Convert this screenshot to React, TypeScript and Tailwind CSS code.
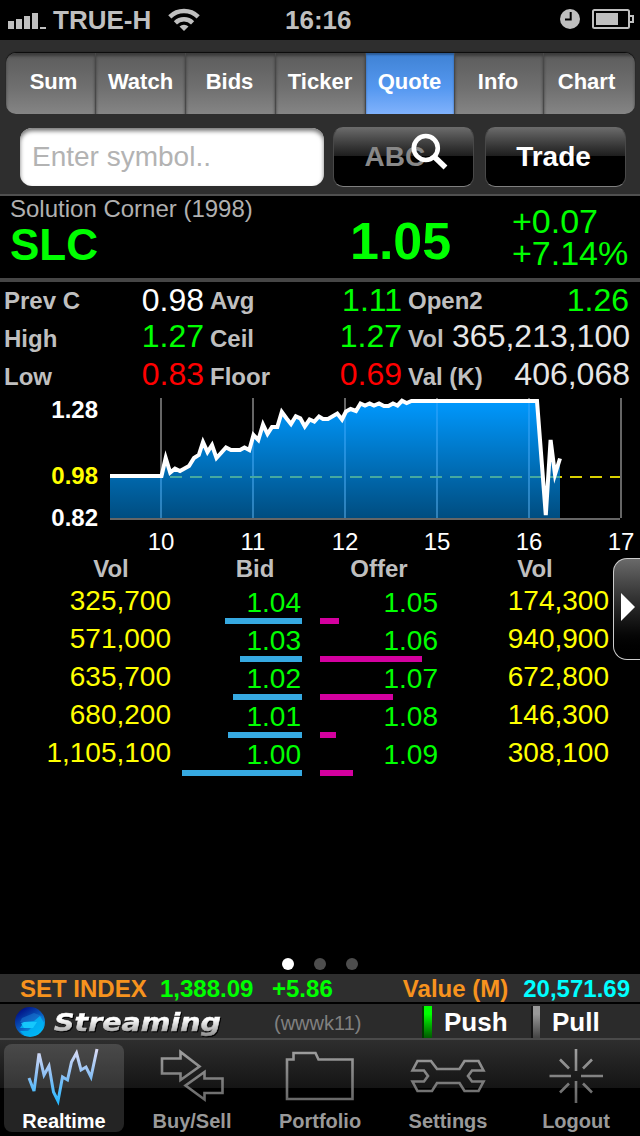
import type { ReactNode } from "react";
import clsx from "clsx";

interface Stat {
  label: string;
  value: string;
  color: string;
}

interface BookRow {
  bidVol: string;
  bid: string;
  bidBar: number;
  offer: string;
  offerBar: number;
  offerVol: string;
}

const tabs = [
  { label: "Sum", width: "w-[90px] pl-[6px]" },
  { label: "Watch", width: "w-[90px]" },
  { label: "Bids", width: "w-[90px] pr-0.5" },
  { label: "Ticker", width: "w-[90px] pr-px" },
  { label: "Quote", width: "w-[89px] pr-px" },
  { label: "Info", width: "w-[89px] pr-0.5" },
  { label: "Chart", width: "w-[91px] pr-[6px]" },
];

const stats: Stat[][] = [
  [
    { label: "Prev C", value: "0.98", color: "text-white" },
    { label: "Avg", value: "1.11", color: "text-[#00ff00]" },
    { label: "Open2", value: "1.26", color: "text-[#00ff00]" },
  ],
  [
    { label: "High", value: "1.27", color: "text-[#00ff00]" },
    { label: "Ceil", value: "1.27", color: "text-[#00ff00]" },
    { label: "Vol", value: "365,213,100", color: "text-[#e6e6e6]" },
  ],
  [
    { label: "Low", value: "0.83", color: "text-[#ff0000]" },
    { label: "Floor", value: "0.69", color: "text-[#ff0000]" },
    { label: "Val (K)", value: "406,068", color: "text-[#e6e6e6]" },
  ],
];

const book: BookRow[] = [
  { bidVol: "325,700", bid: "1.04", bidBar: 77, offer: "1.05", offerBar: 19, offerVol: "174,300" },
  { bidVol: "571,000", bid: "1.03", bidBar: 62, offer: "1.06", offerBar: 102, offerVol: "940,900" },
  { bidVol: "635,700", bid: "1.02", bidBar: 69, offer: "1.07", offerBar: 73, offerVol: "672,800" },
  { bidVol: "680,200", bid: "1.01", bidBar: 74, offer: "1.08", offerBar: 16, offerVol: "146,300" },
  { bidVol: "1,105,100", bid: "1.00", bidBar: 120, offer: "1.09", offerBar: 33, offerVol: "308,100" },
];

const hours = ["10", "11", "12", "15", "16", "17"];
const gridX = [161, 253, 345, 437, 529, 621];

const pricePoints =
  "110,476 161.5,476 165.7,458 170.2,472.5 175,468.7 180,471 189,466 194,458 198.8,455 203,442 207.5,452 212,445 216.5,458 226,447.5 231,450 240,450 244.5,447.5 249.3,450 253.5,435 258.3,440 263,424.5 267.5,434 272,427 277.3,427 281.8,412 286.6,418.5 291,424 295.8,416.3 300.3,418.3 304.8,426.5 309.6,419.5 314.3,421.5 319,416.5 323,419 328,419 337.3,413.5 342,419.5 346,411.5 350.6,409 356,411 360.5,403.5 365,405.5 369.6,403.5 374,405.5 379,403.5 384,406 388.5,406 393,403.5 397.5,405.5 402,400.8 406.6,403 411.5,401 537,401 545.8,515 550.6,440 555,474.5 560,458.5";

function StatusBar() {
  return (
    <div className="flex h-10 items-center bg-black text-[26px] leading-10 font-bold text-[#bfbfbf]">
      <svg className="ml-2 h-10 w-[38px]" viewBox="8 0 38 40" fill="#bfbfbf">
        <path d="M8 21h6v8H8zM16 19h6v10h-6zM24 16h6v13h-6zM32 13h6v16h-6zM40 27h6v2h-6z" />
      </svg>
      <span className="ml-[7px] w-[107px]">TRUE-H</span>
      <svg className="ml-[7px] h-10 w-[34px]" viewBox="167 0 34 40" fill="none" stroke="#bfbfbf" strokeWidth="4.5">
        <path d="M169.8 16.8a20.3 20.3 0 0 1 28.4 0" />
        <path d="M175.4 22.8a12.3 12.3 0 0 1 17.2 0" />
        <path d="M179.5 26.4a6.6 6.6 0 0 1 9 0L184 31z" fill="#bfbfbf" stroke="none" />
      </svg>
      <span className="ml-[84px] w-[80px]">16:16</span>
      <svg className="ml-auto h-10 w-[76px]" viewBox="558 0 76 40">
        <circle cx="570" cy="19" r="10" fill="#bfbfbf" />
        <path d="M570.7 12v7.5H565" fill="none" stroke="#000" strokeWidth="2" />
        <rect x="593" y="10" width="36" height="18" rx="1.5" fill="none" stroke="#bfbfbf" strokeWidth="2" />
        <path d="M596 13h22v12h-22z" fill="#bfbfbf" />
        <path d="M630 16h3v6h-3" fill="none" stroke="#bfbfbf" strokeWidth="2" />
      </svg>
      <div className="w-1.5" />
    </div>
  );
}

function GlossButton({ children }: { children: ReactNode }) {
  return (
    <button
      type="button"
      className="flex h-[60px] w-[141px] items-center justify-center rounded-[10px] border border-t-[#6a6a6a] border-x-[#484848] border-b-[#808080] bg-linear-to-b from-[#6a6a6a] from-0% via-[#1e1e1e] via-48% to-black to-49% text-[28px] font-bold text-white"
    >
      {children}
    </button>
  );
}

function Header() {
  return (
    <header className="h-[154px] bg-[#2e2e2e] pt-[13px]">
      <nav className="ml-[6px] flex h-[61px] w-[629px] overflow-hidden rounded-[10px] bg-linear-to-b from-[#5c5c5c] from-0% via-[#707070] via-58% to-[#858585] to-100% text-[22px] font-bold text-white shadow-[0_-1px_1px_#0a0a0a]">
        {tabs.map((tab, i) => (
          <a
            key={tab.label}
            className={clsx(
              "flex h-full items-center justify-center pb-[5px]",
              tab.width,
              i < tabs.length - 1 && "border-r border-[#484848]",
              tab.label === "Quote"
                ? "bg-linear-to-b from-[#3f82d4] from-0% via-[#5598f0] via-58% to-[#80b2fc] to-100% shadow-[inset_0_2px_2px_#2b5a94]"
                : "shadow-[inset_0_3px_3px_#3c3c3c]"
            )}
          >
            {tab.label}
          </a>
        ))}
      </nav>
      <div className="mt-[13px] flex">
        <div className="mt-px ml-5 flex h-[58px] w-[304px] items-center rounded-[12px] bg-white pl-3 text-[28px] text-[#b3b3b3] shadow-[inset_0_3px_4px_#777]">
          Enter symbol..
        </div>
        <div className="ml-[9px]">
          <GlossButton>
            <span className="relative h-8 w-[78px] text-left leading-8 font-black text-[#888]">
              ABC
              <svg
                className="absolute -top-[10px] left-[44px]"
                width="40"
                height="40"
                viewBox="408 132 40 40"
                fill="none"
                stroke="#fff"
              >
                <circle cx="424.8" cy="149" r="12" strokeWidth="4.6" />
                <path d="m433 157.5 11.5 11" strokeWidth="5.5" />
              </svg>
            </span>
          </GlossButton>
        </div>
        <div className="ml-[11px]">
          <GlossButton>
            <span className="pr-1">Trade</span>
          </GlossButton>
        </div>
      </div>
    </header>
  );
}

function Summary() {
  return (
    <section className="flex h-[88px] border-t-2 border-b-4 border-t-[#505050] border-b-[#464646] text-[#00ff00]">
      <div className="ml-[10px] w-[340px]">
        <div className="h-[26px] text-2xl leading-[26px] text-[#b0b0b0]">Solution Corner (1998)</div>
        <div className="text-[44px] leading-[46px] font-bold">SLC</div>
      </div>
      <div className="w-[162px] pt-[15px] text-[52px] leading-[60px] font-bold">1.05</div>
      <div className="pt-[9px] text-[34px] leading-8">
        <div>+0.07</div>
        <div>+7.14%</div>
      </div>
    </section>
  );
}

function Stats() {
  return (
    <section>
      {stats.map((row, r) => (
        <div key={r} className="flex h-[38px] pl-1">
          {row.map((stat, c) => (
            <div
              key={stat.label}
              className={clsx(
                "flex items-center justify-between",
                c === 0 && "w-[200px]",
                c === 1 && "ml-[6px] w-[192px]",
                c === 2 && "ml-[6px] w-[222px]",
                c === 2 && r === 0 && "pr-px"
              )}
            >
              <span className="text-2xl font-bold text-[#bfbfbf]">{stat.label}</span>
              <span className={clsx("text-[32px] leading-8", stat.color, r === 0 ? "pb-[2px]" : "pb-[6px]")}>
                {stat.value}
              </span>
            </div>
          ))}
        </div>
      ))}
    </section>
  );
}

function PriceChart() {
  const area = `110,518 ${pricePoints} 560,518`;

  return (
    <section className="h-[160px] overflow-hidden">
      <div className="flex h-[130px]">
        <div className="w-[98px] text-right text-2xl leading-6 font-bold text-white">
          <div className="mt-0.5">1.28</div>
          <div className="mt-[42px] text-[#ffff00]">0.98</div>
          <div className="mt-[18px]">0.82</div>
        </div>
        <svg className="ml-3" width="514" height="126" viewBox="110 396 514 126">
          <defs>
            <linearGradient id="area" x1="0" y1="400" x2="0" y2="518" gradientUnits="userSpaceOnUse">
              <stop offset="0" stopColor="#0099ff" />
              <stop offset="1" stopColor="#004d80" />
            </linearGradient>
            <linearGradient id="gridInside" x1="0" y1="400" x2="0" y2="518" gradientUnits="userSpaceOnUse">
              <stop offset="0" stopColor="#1a9fff" />
              <stop offset="1" stopColor="#2f80b8" />
            </linearGradient>
            <clipPath id="areaClip">
              <polygon points={area} />
            </clipPath>
          </defs>
          {gridX.map((x) => (
            <path key={x} d={`M${x} 398V518`} stroke="#666" strokeWidth="2" />
          ))}
          <path d="M110 477H620" stroke="#d9d000" strokeWidth="2" strokeDasharray="12 8" />
          <polygon points={area} fill="url(#area)" />
          <g clipPath="url(#areaClip)">
            {gridX.map((x) => (
              <rect key={x} x={x - 1} y="398" width="2" height="120" fill="url(#gridInside)" />
            ))}
            <path d="M110 477H620" stroke="#45a9a0" strokeWidth="2" strokeDasharray="12 8" />
          </g>
          <path d="M110 519H620" stroke="#666" strokeWidth="2" />
          <polyline points={pricePoints} fill="none" stroke="#fff" strokeWidth="4" strokeMiterlimit="6" />
        </svg>
      </div>
      <div className="flex pl-[115px] text-2xl leading-8 text-white">
        {hours.map((hour) => (
          <div key={hour} className="w-[92px] shrink-0 text-center">
            {hour}
          </div>
        ))}
      </div>
    </section>
  );
}

function OrderBook() {
  return (
    <section className="h-[230px]">
      <div className="mb-[5px] flex h-[25px] text-center text-2xl leading-[26px] font-bold text-[#bfbfbf]">
        <div className="ml-[40px] w-[142px]">Vol</div>
        <div className="ml-[13px] w-[120px]">Bid</div>
        <div className="ml-[5px] w-[118px]">Offer</div>
        <div className="ml-[37px] w-[120px]">Vol</div>
      </div>
      {book.map((row) => (
        <div key={row.bid} className="flex h-[38px] text-[28px] text-[#ffff00]">
          <div className="w-[171px] text-right leading-[30px]">{row.bidVol}</div>
          <div className="flex w-[131px] flex-col items-end text-[#00ff00]">
            <div className="h-8 pr-px leading-[33px]">{row.bid}</div>
            <div className="h-1.5 bg-[#36a9e1]" style={{ width: row.bidBar }} />
          </div>
          <div className="ml-[18px] w-[118px] text-right text-[#00ff00]">
            <div className="h-8 leading-[33px]">{row.offer}</div>
            <div className="h-1.5 bg-[#d4009f]" style={{ width: row.offerBar }} />
          </div>
          <div className="w-[171px] text-right leading-[30px]">{row.offerVol}</div>
        </div>
      ))}
    </section>
  );
}

function DrawerHandle() {
  return (
    <button
      type="button"
      className="absolute top-[558px] right-0 flex h-[102px] w-[27px] items-center rounded-l-[14px] border border-r-0 border-[#ccc] bg-linear-to-b from-[#6a6a6a] to-black pb-1 pl-[7px]"
    >
      <svg width="14" height="28" viewBox="0 0 14 28" fill="#fff">
        <path d="M0 0 14 14 0 28z" />
      </svg>
    </button>
  );
}

function Brand() {
  return (
    <svg width="228" height="34" viewBox="0 1004 228 34">
      <defs>
        <linearGradient id="orb" x1="0.1" y1="0.1" x2="0.7" y2="1">
          <stop offset="0" stopColor="#000a80" />
          <stop offset="0.55" stopColor="#0a62c4" />
          <stop offset="1" stopColor="#00c8ff" />
        </linearGradient>
        <linearGradient id="brandText" x1="0" y1="1012" x2="0" y2="1036" gradientUnits="userSpaceOnUse">
          <stop offset="0.3" stopColor="#fff" />
          <stop offset="1" stopColor="#8c8c8c" />
        </linearGradient>
      </defs>
      <circle cx="30" cy="1022" r="15" fill="url(#orb)" />
      <path d="m22 1018 12-5 8 3 2 6H20z" fill="#1a7fd6" opacity="0.5" />
      <path d="m24 1022 10-1 6-5 4 7-3 8-7 5h-9l-5-5h8l3-3h-11z" fill="#00b4f5" opacity="0.85" />
      <path d="m21 1023 3-1h13l-4 6h-9z" fill="#1ad0ff" opacity="0.8" />
      <text
        x="54"
        y="1031"
        textLength="167"
        lengthAdjust="spacingAndGlyphs"
        className="font-['DejaVu_Sans',sans-serif] text-[25px] font-bold italic drop-shadow-[1px_1px_0_#000]"
        fill="url(#brandText)"
        stroke="url(#brandText)"
        strokeWidth="0.5"
      >
        Streaming
      </text>
    </svg>
  );
}

const navItems = [
  {
    label: "Realtime",
    viewBox: "4 1044 120 62",
    path: "M29 1078 34 1091 39 1053.5 44 1075 49 1066 53.5 1092 58 1101 62.5 1077 67.5 1080 71.5 1062 76.5 1053 81 1070 86 1067 91 1077 97 1049",
  },
  {
    label: "Buy/Sell",
    viewBox: "132 1044 120 62",
    path: "M162 1058.5H180.5V1052L199.5 1066.5 180.5 1080V1073.5H162ZM222.5 1078.5H204.5V1072L185.5 1085.5 204.5 1099.5V1093H222.5Z",
  },
  {
    label: "Portfolio",
    viewBox: "260 1044 120 62",
    path: "M287 1099V1059.5H293.5V1053H315.5L318.5 1059.5H352.5V1099Z",
  },
  {
    label: "Settings",
    viewBox: "388 1044 120 62",
    path: "M417.5 1061H431L437 1069H459.5L464.5 1061H478.5L483.5 1070.5H472L468 1076 472 1081.5H483.5L478.5 1091H464.5L459.5 1083H437L432 1091H417.5L412.5 1081.5H424L428 1076 424 1070.5H412.5Z",
  },
  {
    label: "Logout",
    viewBox: "516 1044 120 62",
    path: "M576 1049V1071M576 1081V1103M549.5 1076H571M581 1076H603M560 1059.5 569 1068.5M592 1059.5 583 1068.5M560 1092.5 569 1083.5M592 1092.5 583 1083.5",
  },
];

function BottomNav() {
  return (
    <nav className="flex h-[98px] border-t-2 border-[#4a4a4a] bg-linear-to-b from-[#2e2e2e] from-0% via-[#151515] via-50% to-black to-50%">
      {navItems.map((item, i) => {
        const active = i === 0;
        return (
          <a
            key={item.label}
            className={clsx(
              "mx-1 mt-1 flex h-[88px] w-[120px] flex-col items-center rounded-lg",
              active ? "bg-white/14 text-white" : "text-[#999]"
            )}
          >
            <svg
              className="shrink-0"
              width="120"
              height="62"
              viewBox={item.viewBox}
              fill="none"
              stroke={active ? "url(#navActive)" : "url(#navIdle)"}
              strokeWidth={active ? 3 : 2.6}
            >
              <defs>
                <linearGradient id="navActive" x1="0" y1="1049" x2="0" y2="1102" gradientUnits="userSpaceOnUse">
                  <stop offset="0" stopColor="#dcdcf5" />
                  <stop offset="0.5" stopColor="#8cc0f5" />
                  <stop offset="1" stopColor="#28b8ff" />
                </linearGradient>
                <linearGradient id="navIdle" x1="0" y1="1049" x2="0" y2="1102" gradientUnits="userSpaceOnUse">
                  <stop offset="0" stopColor="#a0a0a0" />
                  <stop offset="1" stopColor="#666" />
                </linearGradient>
              </defs>
              <path d={item.path} />
            </svg>
            <span className="mt-1 text-xl leading-[22px] font-bold">{item.label}</span>
          </a>
        );
      })}
    </nav>
  );
}

export default function App() {
  return (
    <div className="relative flex h-[1136px] w-[640px] flex-col overflow-hidden bg-black font-['Liberation_Sans',Arial,sans-serif] whitespace-nowrap">
      <StatusBar />
      <Header />
      <Summary />
      <Stats />
      <PriceChart />
      <OrderBook />
      <DrawerHandle />
      <div className="mt-auto mb-1 flex justify-center gap-5">
        <i className="h-3 w-3 rounded-full bg-white" />
        <i className="h-3 w-3 rounded-full bg-[#4d4d4d]" />
        <i className="h-3 w-3 rounded-full bg-[#4d4d4d]" />
      </div>
      <div className="flex h-7 bg-[#2e2e2e] px-[10px] pl-5 text-2xl leading-[29px] font-bold text-[#00ff00]">
        <span className="w-[140px] text-[#f7931e]">SET INDEX</span>
        <span className="w-[112px]">1,388.09</span>
        <span>+5.86</span>
        <span className="ml-auto text-[#f7931e]">Value (M)</span>
        <span className="ml-[15px] text-[#00ffff]">20,571.69</span>
      </div>
      <div className="mt-0.5 flex h-[34px] bg-[#2b2b2b] text-[26px] leading-9 font-bold text-white">
        <Brand />
        <span className="ml-[46px] w-[148px] pt-[5px] text-xl font-normal text-[#808080]">(wwwk11)</span>
        <i className="mt-0.5 h-8 w-[10px] border-l-2 border-[#003800] bg-linear-to-b from-[#00ff00] from-25% to-[#005a00]" />
        <span className="ml-3 w-[87px]">Push</span>
        <i className="mt-0.5 h-8 w-[9px] border-l-2 border-[#151515] bg-linear-to-b from-[#999] from-25% to-[#444]" />
        <span className="ml-3">Pull</span>
      </div>
      <BottomNav />
    </div>
  );
}
